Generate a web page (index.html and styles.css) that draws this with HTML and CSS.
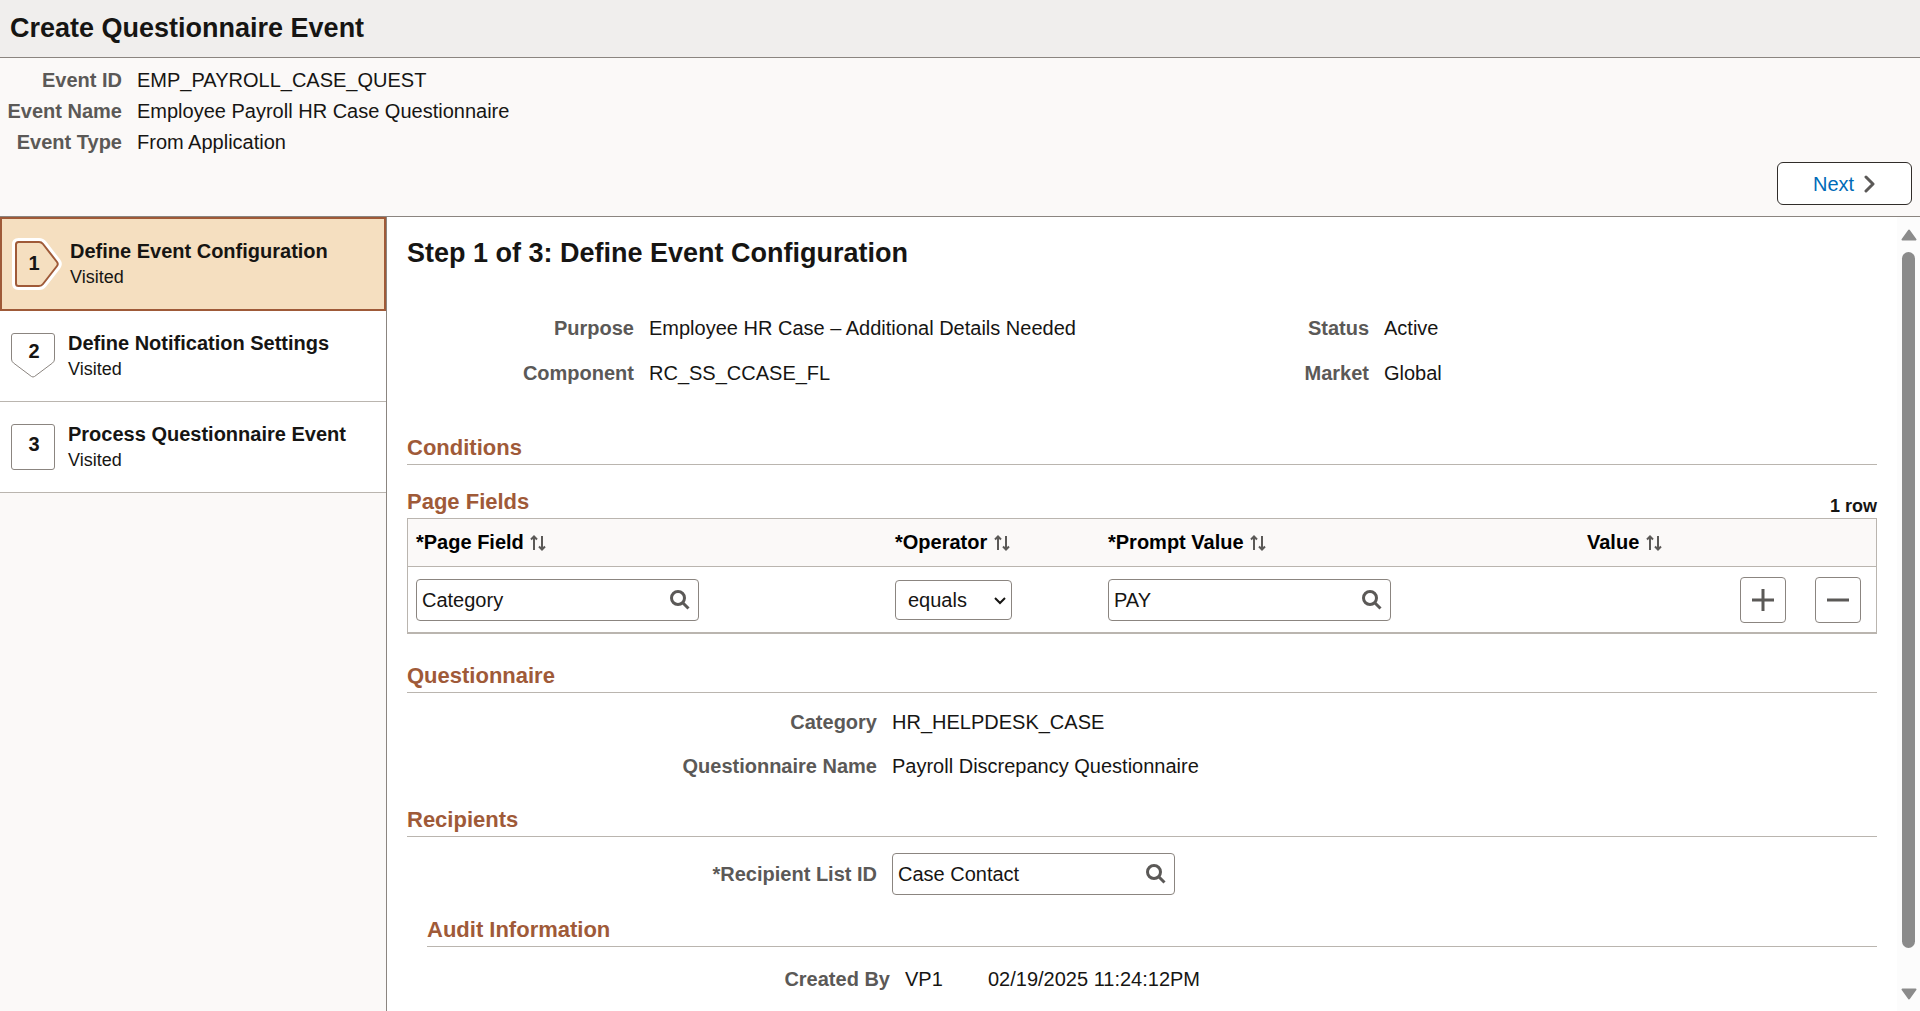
FILE: index.html
```html
<!DOCTYPE html>
<html lang="en">
  <head>
    <meta charset="UTF-8" />
    <meta name="viewport" content="width=device-width, initial-scale=1.0" />
    <title>Create Questionnaire Event</title>
    <link rel="stylesheet" href="styles.css" />
  </head>
  <body>
    <header class="title-bar">
      <h1>Create Questionnaire Event</h1>
    </header>

    <section class="event-info">
      <dl class="event-list">
        <dt>Event ID</dt>
        <dd>EMP_PAYROLL_CASE_QUEST</dd>
        <dt>Event Name</dt>
        <dd>Employee Payroll HR Case Questionnaire</dd>
        <dt>Event Type</dt>
        <dd>From Application</dd>
      </dl>
      <button type="button" class="next">
        Next
        <svg width="12" height="18" viewBox="0 0 12 18" aria-hidden="true">
          <path d="M2 2l7 7-7 7" fill="none" stroke="#5b5957" stroke-width="3" stroke-linecap="round" stroke-linejoin="round" />
        </svg>
      </button>
    </section>

    <div class="wrapper">
      <!-- steps -->
      <nav class="steps">
        <button type="button" class="step current" aria-current="step">
          <svg width="50" height="54" viewBox="0 0 50 54" aria-hidden="true">
            <path class="halo" d="M6.500 5h20.500q2.500 0 4 2l14 18q1.500 2 0 4l-14 18q-1.500 2-4 2h-20.500q-2.500 0-2.500-2.500v-39q0-2.500 2.500-2.500z" />
            <path class="shape" d="M6.500 5h20.500q2.500 0 4 2l14 18q1.500 2 0 4l-14 18q-1.500 2-4 2h-20.500q-2.500 0-2.500-2.500v-39q0-2.500 2.500-2.500z" />
            <text x="22" y="33">1</text>
          </svg>
          <span class="step-text">
            <span class="step-name">Define Event Configuration</span>
            <span class="step-state">Visited</span>
          </span>
        </button>
        <button type="button" class="step">
          <svg width="46" height="48" viewBox="0 0 46 48" aria-hidden="true">
            <path class="shape" d="M4 1.500h38q2.500 0 2.500 2.500v23q0 2.500-2 4l-18 13.500q-1.500 1-3 0l-18-13.500q-2-1.500-2-4v-23q0-2.500 2.500-2.500z" />
            <text x="24" y="26">2</text>
          </svg>
          <span class="step-text">
            <span class="step-name">Define Notification Settings</span>
            <span class="step-state">Visited</span>
          </span>
        </button>
        <button type="button" class="step">
          <svg width="46" height="48" viewBox="0 0 46 48" aria-hidden="true">
            <rect class="shape" x="1.500" y="1.500" width="43" height="45" rx="2.500" />
            <text x="24" y="28">3</text>
          </svg>
          <span class="step-text">
            <span class="step-name">Process Questionnaire Event</span>
            <span class="step-state">Visited</span>
          </span>
        </button>
      </nav>

      <!-- step content -->
      <main class="content">
        <h2 class="step-title">Step 1 of 3: Define Event Configuration</h2>

        <dl class="summary">
          <dt>Purpose</dt>
          <dd>Employee HR Case – Additional Details Needed</dd>
          <dt>Status</dt>
          <dd>Active</dd>
          <dt>Component</dt>
          <dd>RC_SS_CCASE_FL</dd>
          <dt>Market</dt>
          <dd>Global</dd>
        </dl>

        <h3 class="section">Conditions</h3>

        <div class="grid-head">
          <h3>Page Fields</h3>
          <span class="rows">1 row</span>
        </div>
        <table class="fields">
          <colgroup>
            <col class="col-field" />
            <col class="col-operator" />
            <col class="col-prompt" />
            <col />
            <col class="col-add" />
            <col class="col-del" />
          </colgroup>
          <thead>
            <tr>
              <th>*Page Field
                <svg class="sort" width="18" height="18" viewBox="0 0 18 18"><path d="M5 16V2.500M2 5.500l3-3 3 3M13 2v13.500M10 12.500l3 3 3-3" /></svg></th>
              <th>*Operator
                <svg class="sort" width="18" height="18" viewBox="0 0 18 18"><path d="M5 16V2.500M2 5.500l3-3 3 3M13 2v13.500M10 12.500l3 3 3-3" /></svg></th>
              <th>*Prompt Value
                <svg class="sort" width="18" height="18" viewBox="0 0 18 18"><path d="M5 16V2.500M2 5.500l3-3 3 3M13 2v13.500M10 12.500l3 3 3-3" /></svg></th>
              <th>Value
                <svg class="sort" width="18" height="18" viewBox="0 0 18 18"><path d="M5 16V2.500M2 5.500l3-3 3 3M13 2v13.500M10 12.500l3 3 3-3" /></svg></th>
              <th></th>
              <th></th>
            </tr>
          </thead>
          <tbody>
            <tr>
              <td>
                <div class="lookup">
                  <input type="text" value="Category" aria-label="Page Field" />
                  <button type="button" aria-label="Look up Page Field">
                    <svg width="20" height="20" viewBox="0 0 20 20"><circle cx="8" cy="8" r="6.500" /><path d="M12.500 12.500l6 6" /></svg>
                  </button>
                </div>
              </td>
              <td>
                <div class="picker">
                  <select aria-label="Operator">
                    <option>equals</option>
                  </select>
                  <svg width="14" height="9" viewBox="0 0 14 9" aria-hidden="true"><path d="M2 2l5 5 5-5" /></svg>
                </div>
              </td>
              <td>
                <div class="lookup">
                  <input type="text" value="PAY" aria-label="Prompt Value" />
                  <button type="button" aria-label="Look up Prompt Value">
                    <svg width="20" height="20" viewBox="0 0 20 20"><circle cx="8" cy="8" r="6.500" /><path d="M12.500 12.500l6 6" /></svg>
                  </button>
                </div>
              </td>
              <td></td>
              <td>
                <button type="button" class="row-btn" aria-label="Add row">
                  <svg width="22" height="22" viewBox="0 0 22 22"><path d="M11 0v22M0 11h22" /></svg>
                </button>
              </td>
              <td>
                <button type="button" class="row-btn" aria-label="Delete row">
                  <svg width="22" height="22" viewBox="0 0 22 22"><path d="M0 11h22" /></svg>
                </button>
              </td>
            </tr>
          </tbody>
        </table>

        <h3 class="section">Questionnaire</h3>
        <dl class="details">
          <dt>Category</dt>
          <dd>HR_HELPDESK_CASE</dd>
          <dt>Questionnaire Name</dt>
          <dd>Payroll Discrepancy Questionnaire</dd>
        </dl>

        <h3 class="section">Recipients</h3>
        <div class="recipient">
          <label for="recipient">*Recipient List ID</label>
          <div class="lookup">
            <input type="text" id="recipient" value="Case Contact" />
            <button type="button" aria-label="Look up Recipient List ID">
              <svg width="20" height="20" viewBox="0 0 20 20"><circle cx="8" cy="8" r="6.500" /><path d="M12.500 12.500l6 6" /></svg>
            </button>
          </div>
        </div>

        <div class="audit">
          <h3 class="section">Audit Information</h3>
          <dl class="created">
            <dt>Created By</dt>
            <dd>VP1</dd>
            <dd>02/19/2025 11:24:12PM</dd>
          </dl>
        </div>
      </main>

      <div class="scrollbar" aria-hidden="true">
        <svg width="16" height="12" viewBox="0 0 16 12"><path d="M8 1.500L14.500 10.500H1.500z" /></svg>
        <div class="track"><div class="thumb"></div></div>
        <svg width="16" height="12" viewBox="0 0 16 12"><path d="M8 10.500L1.500 1.500h13z" /></svg>
      </div>
    </div>
  </body>
</html>
```

FILE: styles.css
```css
* {
  margin: 0;
  padding: 0;
  box-sizing: border-box;
}

body {
  display: flex;
  flex-direction: column;
  height: 100vh;
  overflow: hidden;
  background: #fbf9f8;
  color: #161513;
  font: 20px/24px "Liberation Sans", Arial, sans-serif;
}

button,
input,
select {
  font: inherit;
  color: inherit;
}

button {
  cursor: pointer;
}

dt,
label {
  color: #5b5957;
  font-weight: 700;
  text-align: right;
}

.title-bar {
  padding: 12px 10px 13px;
  background: #f0eeed;
  border-bottom: 1px solid #8b8580;
}

h1,
.step-title {
  font-size: 27px;
  line-height: 32px;
}

/* event info */
.event-info {
  display: flex;
  justify-content: space-between;
  align-items: flex-end;
  padding: 7px 8px 11px 0;
  border-bottom: 1px solid #8b8580;
}

.event-list {
  display: grid;
  grid-template-columns: 122px auto;
  column-gap: 15px;
  align-self: flex-start;
  line-height: 31px;
  padding-bottom: 47px;
}

.next {
  display: flex;
  justify-content: center;
  align-items: center;
  gap: 10px;
  width: 135px;
  height: 43px;
  background: #fff;
  color: #006bb8;
  border: 1px solid #312d2a;
  border-radius: 6px;
}

.wrapper {
  flex: 1;
  display: flex;
  min-height: 0;
}

/* steps */
.steps {
  width: 387px;
  flex-shrink: 0;
  border-right: 1px solid #8b8580;
}

.step {
  display: flex;
  align-items: center;
  gap: 12px;
  width: 100%;
  height: 91px;
  padding-left: 10px;
  background: #fff;
  border: 0;
  border-bottom: 1px solid #bab5af;
  text-align: left;
}

.step.current {
  gap: 8px;
  height: 94px;
  background: #f5dfc0;
  border: 2px solid #9f5a38;
}

.step-text {
  display: flex;
  flex-direction: column;
  line-height: 26px;
}

.step-name {
  font-weight: 700;
}

.step-state {
  font-size: 18px;
}

.step text {
  font-size: 20px;
  font-weight: 700;
  text-anchor: middle;
  fill: #161513;
}

.shape {
  fill: #fff;
  stroke: #8b8580;
}

.current .shape {
  fill: #f5dfc0;
  stroke: #9f5a38;
  stroke-width: 2;
}

.halo {
  fill: none;
  stroke: #fff;
  stroke-width: 8;
}

/* content */
.content {
  flex: 1;
  padding: 20px 20px 0;
  background: #fff;
  overflow: hidden;
}

.summary {
  display: grid;
  grid-template-columns: 227px 1fr 80px 493px;
  column-gap: 15px;
  padding: 37px 0 39px;
  line-height: 45px;
}

h3 {
  color: #9f5a38;
  font-size: 22px;
  line-height: 26px;
}

.section {
  padding-bottom: 3px;
  border-bottom: 1px solid #bab5af;
}

.grid-head {
  display: flex;
  justify-content: space-between;
  align-items: flex-end;
  padding: 24px 0 3px;
}

.rows {
  font-size: 18px;
  line-height: 18px;
  font-weight: 700;
}

.fields {
  width: 100%;
  margin-bottom: 29px;
  table-layout: fixed;
  border-spacing: 0;
  border: 1px solid #bab5af;
  border-bottom-width: 2px;
}

.col-field {
  width: 479px;
}

.col-operator {
  width: 213px;
}

.col-prompt {
  width: 479px;
}

.col-add {
  width: 75px;
}

.col-del {
  width: 69px;
}

.fields th {
  height: 48px;
  padding: 0 0 2px 8px;
  background: #fbf9f8;
  border-bottom: 1px solid #bab5af;
  color: #000;
  text-align: left;
}

.fields td {
  height: 65px;
  padding-left: 8px;
}

.sort {
  vertical-align: -3px;
  fill: none;
  stroke: #5b5957;
  stroke-width: 2px;
}

.lookup {
  display: flex;
  align-items: center;
  width: 283px;
  height: 42px;
  background: #fff;
  border: 1px solid #8b8580;
  border-radius: 4px;
}

.lookup input {
  flex: 1;
  min-width: 0;
  padding-left: 5px;
  background: none;
  border: 0;
  outline: none;
}

.lookup button {
  display: flex;
  padding: 0 8px;
  background: none;
  border: 0;
}

.lookup svg {
  fill: none;
  stroke: #5b5957;
  stroke-width: 3px;
}

.picker {
  position: relative;
  width: 117px;
}

.picker select {
  display: block;
  width: 100%;
  height: 40px;
  padding-left: 12px;
  appearance: none;
  background: #fff;
  border: 1px solid #8b8580;
  border-radius: 4px;
}

.picker svg {
  position: absolute;
  top: 16px;
  right: 5px;
  fill: none;
  stroke: #161513;
  stroke-width: 2px;
  pointer-events: none;
}

.row-btn {
  display: flex;
  justify-content: center;
  align-items: center;
  width: 46px;
  height: 46px;
  background: #fff;
  border: 1px solid #8b8580;
  border-radius: 4px;
}

.row-btn svg {
  stroke: #5b5957;
  stroke-width: 3px;
}

.details {
  display: grid;
  grid-template-columns: 470px auto;
  column-gap: 15px;
  padding: 7px 0 19px;
  line-height: 44px;
}

.recipient {
  display: grid;
  grid-template-columns: 470px auto;
  column-gap: 15px;
  align-items: center;
  padding: 16px 0 22px;
}

.audit {
  padding-left: 20px;
}

.created {
  display: grid;
  grid-template-columns: 463px 68px auto;
  column-gap: 15px;
  padding: 10px 0;
  line-height: 44px;
}

/* scrollbar */
.scrollbar {
  display: flex;
  flex-direction: column;
  align-items: center;
  width: 23px;
  padding: 12px 0 11px;
  background: #fcfcfc;
}

.scrollbar svg {
  fill: #8b8b8b;
  stroke: #8b8b8b;
  stroke-width: 2px;
  stroke-linejoin: round;
}

.track {
  flex: 1;
  width: 13px;
  margin: 11px 0;
}

.thumb {
  height: 96%;
  background: #8b8b8b;
  border-radius: 7px;
}
```
